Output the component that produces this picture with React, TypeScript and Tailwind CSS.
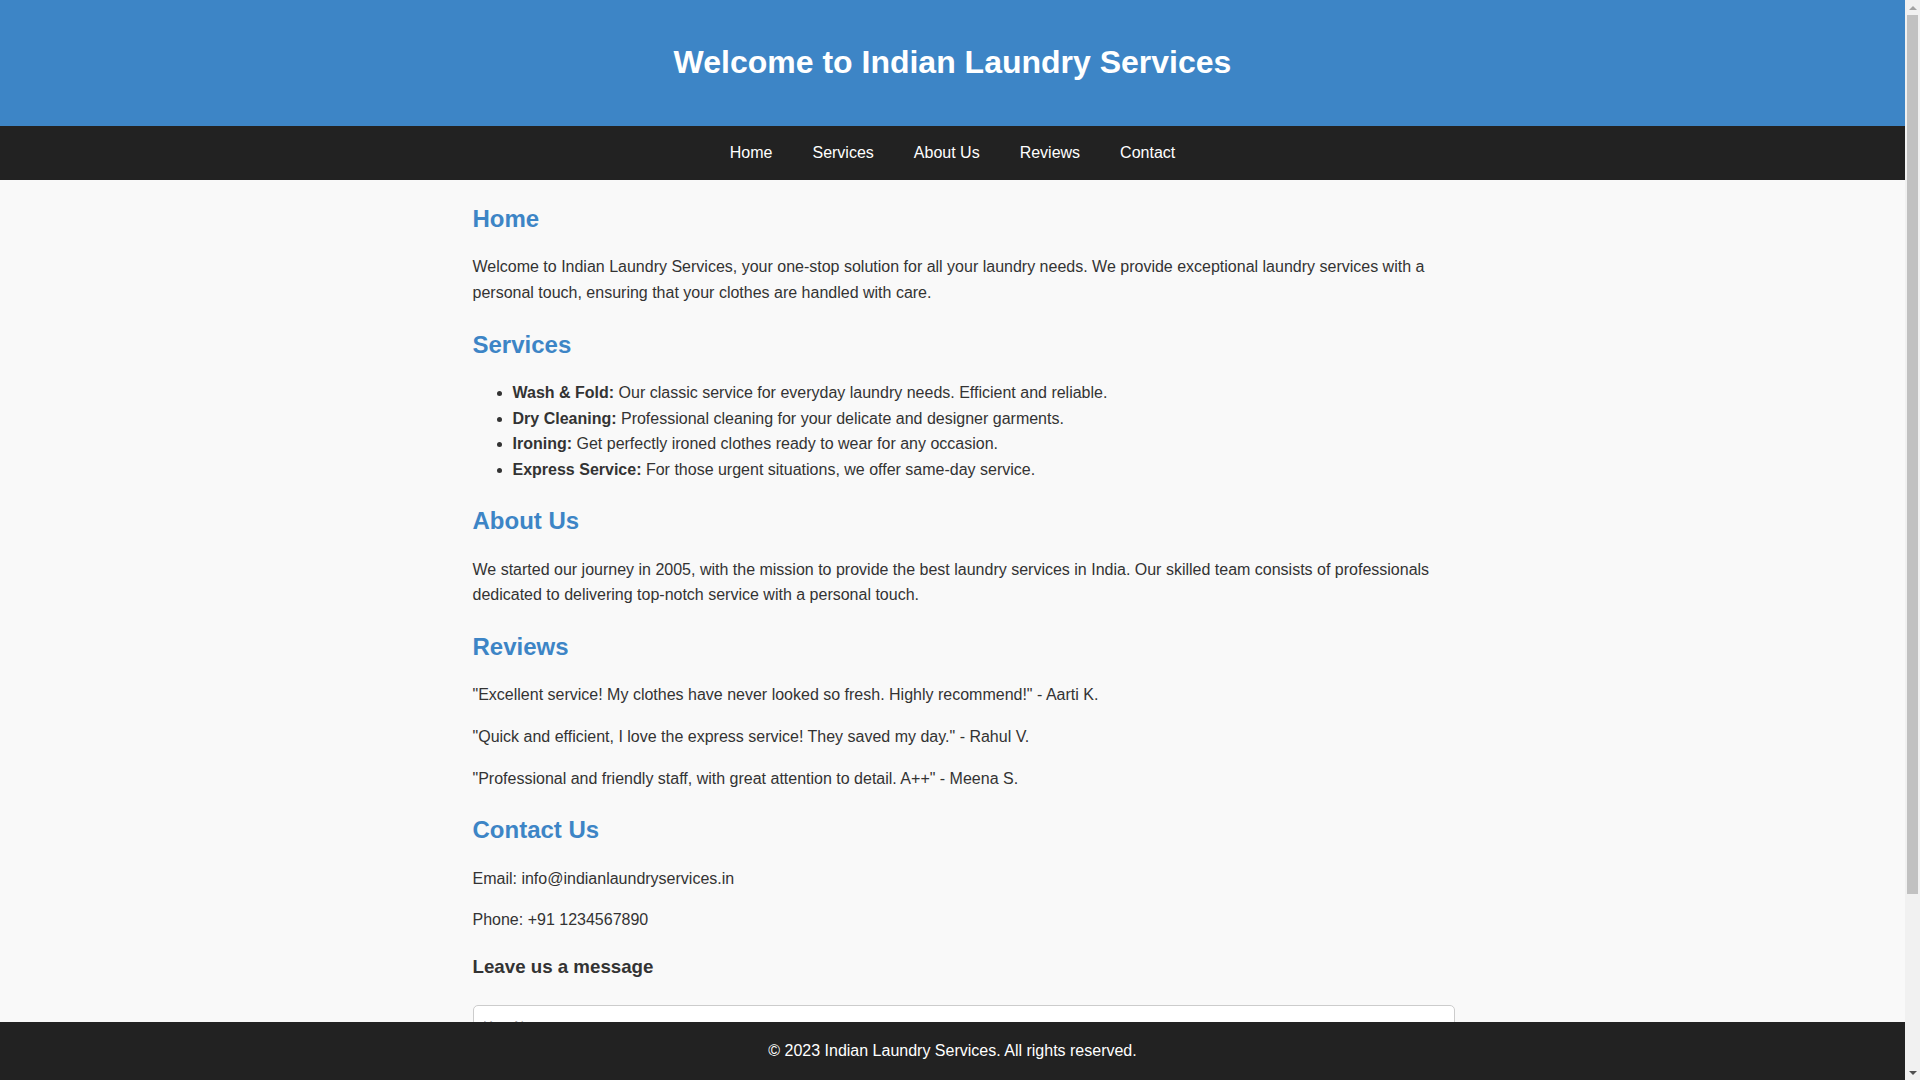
import React from 'react';

const services = [
    { name: 'Wash & Fold:', text: 'Our classic service for everyday laundry needs. Efficient and reliable.' },
    { name: 'Dry Cleaning:', text: 'Professional cleaning for your delicate and designer garments.' },
    { name: 'Ironing:', text: 'Get perfectly ironed clothes ready to wear for any occasion.' },
    { name: 'Express Service:', text: 'For those urgent situations, we offer same-day service.' },
];

const reviews = [
    '"Excellent service! My clothes have never looked so fresh. Highly recommend!" - Aarti K.',
    '"Quick and efficient, I love the express service! They saved my day." - Rahul V.',
    '"Professional and friendly staff, with great attention to detail. A++" - Meena S.',
];

const navLinks = ['Home', 'Services', 'About Us', 'Reviews', 'Contact'];

const Heading: React.FC<{ children: React.ReactNode }> = ({ children }) => (
    <h2 className="mt-5 mb-2 text-[24px] font-bold leading-[38.4px] text-[#3d85c6]">{children}</h2>
);

// the page in the shot scrolls, so it shows a classic scrollbar on the right
const Scrollbar: React.FC = () => (
    <div className="fixed top-0 right-0 bottom-0 flex w-[15px] flex-col bg-[#f1f1f1]">
        <div className="flex h-[15px] items-center justify-center">
            <div className="h-0 w-0 border-x-[4px] border-b-[4px] border-x-transparent border-b-[#a3a3a3]"></div>
        </div>
        <div className="mx-[2px] h-[879px] bg-[#c1c1c1]"></div>
        <div className="flex-1"></div>
        <div className="flex h-[15px] items-center justify-center">
            <div className="h-0 w-0 border-x-[4px] border-t-[4px] border-x-transparent border-t-[#505050]"></div>
        </div>
    </div>
);

const fieldClass = 'box-content w-full rounded-[5px] border border-[#ccc] bg-white p-[10px] text-[13.33px] leading-normal placeholder:text-[#a9a9a9]';

const App: React.FC = () => {
    return (
        <div className="min-h-screen bg-[#f9f9f9] pr-[15px] text-[16px] leading-[1.6] text-[#333] font-['Liberation_Sans',Arial,sans-serif]">
            <header className="bg-[#3d85c6] py-4 text-center text-white">
                <h1 className="my-[21.44px] text-[32px] font-bold leading-[51.2px]">Welcome to Indian Laundry Services</h1>
            </header>

            <nav className="flex h-[54px] items-center justify-center bg-[#222]">
                {navLinks.map(link => (
                    <a key={link} href={`#${link.toLowerCase().replace(' ', '')}`} className="px-5 text-white">
                        {link}
                    </a>
                ))}
            </nav>

            <main className="mx-auto max-w-[1000px] px-5 pb-[70px]">
                <section id="home">
                    <Heading>Home</Heading>
                    <p className="my-4">
                        Welcome to Indian Laundry Services, your one-stop solution for all your laundry needs. We provide exceptional laundry services with a personal touch, ensuring that your clothes are handled with care.
                    </p>
                </section>

                <section id="services">
                    <Heading>Services</Heading>
                    <ul className="my-4 list-disc pl-10">
                        {services.map(s => (
                            <li key={s.name}>
                                <strong className="font-bold">{s.name}</strong> {s.text}
                            </li>
                        ))}
                    </ul>
                </section>

                <section id="aboutus">
                    <Heading>About Us</Heading>
                    <p className="my-4">
                        We started our journey in 2005, with the mission to provide the best laundry services in India. Our skilled team consists of professionals dedicated to delivering top-notch service with a personal touch.
                    </p>
                </section>

                <section id="reviews">
                    <Heading>Reviews</Heading>
                    {reviews.map(r => (
                        <p key={r} className="my-4">{r}</p>
                    ))}
                </section>

                <section id="contact">
                    <Heading>Contact Us</Heading>
                    <p className="my-4">Email: info@indianlaundryservices.in</p>
                    <p className="my-4">Phone: +91 1234567890</p>
                    <h3 className="mt-[18.72px] mb-[24px] text-[18.72px] font-bold leading-[1.6]">Leave us a message</h3>
                    <form className="flex flex-col gap-[10px]" onSubmit={e => e.preventDefault()}>
                        <input type="text" placeholder="Your Name" className={fieldClass} />
                        <input type="email" placeholder="Your Email" className={fieldClass} />
                        <textarea placeholder="Your Message" rows={4} className={fieldClass}></textarea>
                        <button type="submit" className="self-start rounded-[5px] bg-[#3d85c6] px-5 py-[10px] text-white">
                            Send Message
                        </button>
                    </form>
                </section>
            </main>

            <footer className="fixed right-[15px] bottom-0 left-0 bg-[#222] py-4 text-center text-white">
                © 2023 Indian Laundry Services. All rights reserved.
            </footer>

            <Scrollbar />
        </div>
    );
};

export default App;
